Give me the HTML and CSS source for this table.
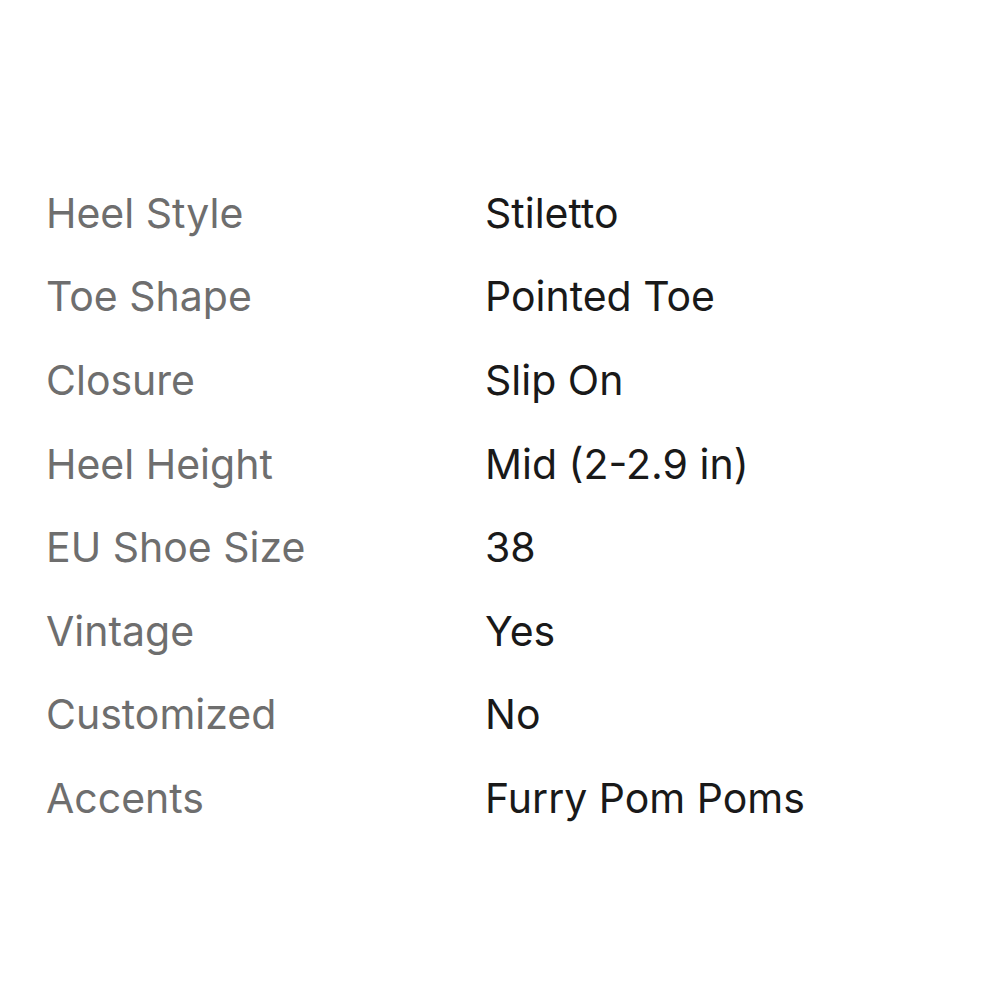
FILE: index.html
```html
<!DOCTYPE html>
<html>
<head>
<meta charset="utf-8">
<link rel="stylesheet" href="styles.css">
</head>
<body>
<dl class="specs">
  <div class="row"><dt>Heel Style</dt><dd>Stiletto</dd></div>
  <div class="row"><dt>Toe Shape</dt><dd>Pointed Toe</dd></div>
  <div class="row"><dt>Closure</dt><dd>Slip On</dd></div>
  <div class="row"><dt>Heel Height</dt><dd>Mid (2-2.9 in)</dd></div>
  <div class="row"><dt>EU Shoe Size</dt><dd>38</dd></div>
  <div class="row"><dt>Vintage</dt><dd>Yes</dd></div>
  <div class="row"><dt>Customized</dt><dd>No</dd></div>
  <div class="row"><dt>Accents</dt><dd>Furry Pom Poms</dd></div>
</dl>
</body>
</html>
```
FILE: styles.css
```css
html, body {
  margin: 0;
  padding: 0;
  background: #ffffff;
}
body {
  font-family: Inter, "Noto Sans", sans-serif;
  width: 1000px;
  height: 1000px;
}
.specs {
  margin: 0;
  padding: 171px 0 0 46px;
}
.row {
  display: grid;
  grid-template-columns: 439px 1fr;
  height: 83.6px;
  align-items: center;
  font-size: 41px;
}
dt {
  color: #6e6e6e;
  margin: 0;
}
dd {
  color: #191919;
  margin: 0;
}
```
